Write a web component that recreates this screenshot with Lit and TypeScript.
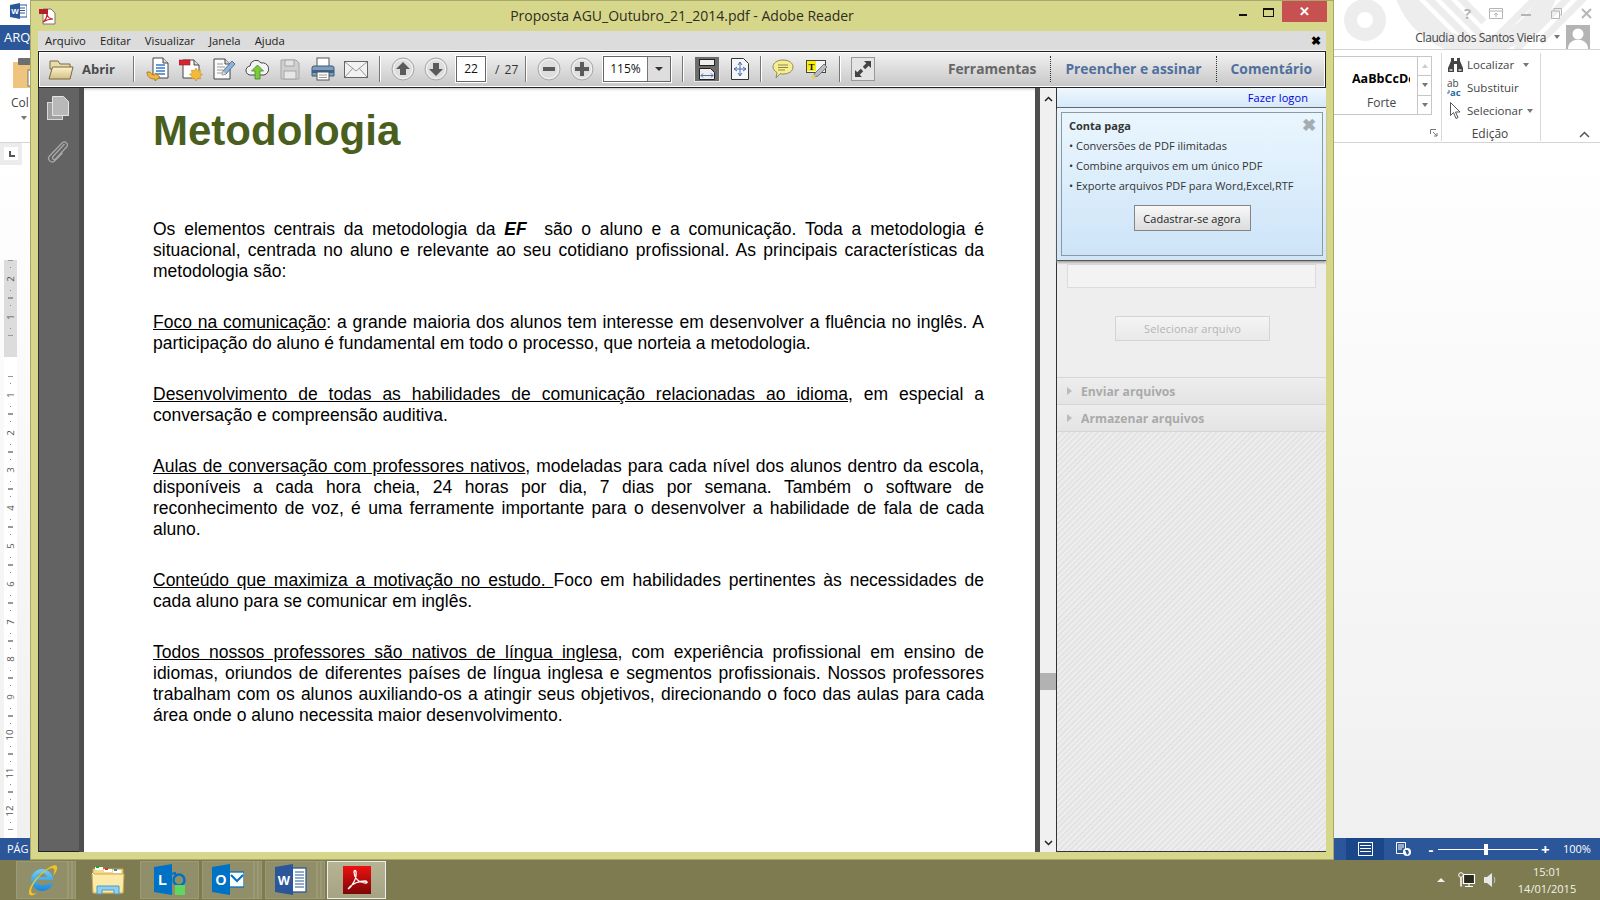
import { LitElement, css, html, svg } from "lit";
import { customElement } from "lit/decorators.js";

const folder = svg`<svg width="26" height="22" viewBox="0 0 26 22"><defs><linearGradient id="fo" x1="0" y1="0" x2="0" y2="1"><stop offset="0" stop-color="#fbf3d0"/><stop offset="1" stop-color="#d6bf85"/></linearGradient></defs><path d="M2 3h8l2 3h10v5H2z" fill="#e9dcae" stroke="#7d6a3c"/><path d="M1 21 4.500 9H25l-3 12z" fill="url(#fo)" stroke="#7d6a3c"/></svg>`;

const tbIcons = [
  svg`<svg width="24" height="24" viewBox="0 0 24 24"><path d="M7 1h10l5 5v15H7z" fill="#fff" stroke="#444"/><path d="M17 1v5h5" fill="#ddd" stroke="#444"/><path d="M10 8h9M10 11h9M10 14h9M10 17h9" stroke="#3a78c9" stroke-width="1.500"/><path d="M1 15c0 5 3 7 8 7v2l5-4-5-4v2c-3 0-4-1-5-3z" fill="#f0b840" stroke="#a86f10" stroke-width=".8"/></svg>`,
  svg`<svg width="24" height="24" viewBox="0 0 24 24"><path d="M4 3h11l5 5v13H4z" fill="#fff" stroke="#444"/><path d="M15 3v5h5" fill="#ddd" stroke="#444"/><rect x="0" y="3" width="11" height="5" fill="#d9232e" stroke="#9c1a20" stroke-width=".6"/><path d="m17 11 1.500 2.500 3-.5-.5 3 2.500 1.500-2.500 1.500.5 3-3-.5-1.500 2.500-1.500-2.500-3 .5.5-3-2.500-1.500 2.500-1.500-.5-3 3 .5z" fill="#f2b93a" stroke="#b9821c" stroke-width=".5"/></svg>`,
  svg`<svg width="24" height="24" viewBox="0 0 24 24"><path d="M2 2h11l5 5v15H2z" fill="#fafafa" stroke="#444"/><path d="M13 2v5h5" fill="#ddd" stroke="#444"/><path d="M5 7h6M5 10h8M5 13h6M5 16h5" stroke="#999"/><path d="m10 18 1-4 9-10 3 3-9 10z" fill="#8db4d8" stroke="#3c5f88" stroke-width=".8"/><path d="m10 18 1-4 3 3z" fill="#f3d9a8"/></svg>`,
  svg`<svg width="24" height="24" viewBox="0 0 24 24"><path d="M6 19a4.500 4.500 0 0 1-1-9 6 6 0 0 1 11-3 5 5 0 0 1 3 12z" fill="#f4f4f4" stroke="#444" transform="translate(0 -1)"/><path d="M12.500 8l6 6h-3.500v8h-5v-8H6.500z" fill="#7ccb3c" stroke="#3f8a1f" stroke-width=".8"/></svg>`,
  svg`<svg width="24" height="24" viewBox="0 0 24 24"><path d="M3 3h15l3 3v16H3z" fill="#cfcfcf" stroke="#a5a5a5"/><rect x="7" y="3" width="9" height="6" fill="#e4e4e4" stroke="#a5a5a5"/><rect x="6" y="14" width="12" height="8" fill="#e6e6e6" stroke="#a5a5a5"/></svg>`,
  svg`<svg width="24" height="24" viewBox="0 0 24 24"><rect x="6" y="1" width="12" height="9" fill="#fff" stroke="#555"/><path d="M3 9h18a2 2 0 0 1 2 2v8H1v-8a2 2 0 0 1 2-2z" fill="#7d9fbf" stroke="#3d5a75"/><rect x="1" y="13" width="22" height="3" fill="#3d6187"/><rect x="6" y="15" width="12" height="8" fill="#fff" stroke="#555"/><path d="M8 18h8M8 20.500h8" stroke="#999"/></svg>`,
  svg`<svg width="24" height="24" viewBox="0 0 24 24"><rect x="0.500" y="4.500" width="23" height="16" fill="#f2f2f2" stroke="#666"/><path d="m1 5 11 9 11-9M1 20l8-9M23 20l-8-9" fill="none" stroke="#999"/></svg>`,
];

const circleBtn = (d: string) => svg`<svg width="24" height="24" viewBox="0 0 24 24"><circle cx="12" cy="12" r="11" fill="#dedede" stroke="#a8a8a8"/><circle cx="12" cy="12" r="9.500" fill="none" stroke="#f6f6f6"/><path d="${d}" fill="#5a5a5a"/></svg>`;
const upArrow = circleBtn("M12 5l7 7h-4v6H9v-6H5z");
const downArrow = circleBtn("M12 19l7-7h-4V6H9v6H5z");
const minusIcon = circleBtn("M6 10h12v4H6z");
const plusIcon = circleBtn("M10 5h4v5h5v4h-5v5h-4v-5H5v-4h5z");

const fitWidth = svg`<svg width="26" height="26" viewBox="0 0 26 26"><rect width="26" height="26" fill="#6c6c6c"/><rect x=".5" y=".5" width="25" height="25" fill="none" stroke="#e8e8e8"/><rect x="5.500" y="3.500" width="15" height="6" fill="#eee" stroke="#222"/><path d="M5.500 12.500h11l4 4v7h-15z" fill="#eee" stroke="#222"/><path d="M7 19.500h12M7 19.500l2-2M7 19.500l2 2M19 19.500l-2-2M19 19.500l-2 2" stroke="#4a6fb0" fill="none"/></svg>`;
const fitPage = svg`<svg width="18" height="24" viewBox="0 0 18 24"><path d="M.5 1.500h12l5 5v16H.500z" fill="#f6f6f6" stroke="#333"/><path d="M9 5v14M3 12h12M9 5 7 8M9 5l2 3M9 19l-2-3M9 19l2-3M3 12l3-2M3 12l3 2M15 12l-3-2M15 12l-3 2" stroke="#4a6fb0" fill="none"/></svg>`;
const commentIcon = svg`<svg width="22" height="20" viewBox="0 0 22 20"><path d="M11 1c6 0 10 3 10 7s-4 7-10 7c-1 0-2 0-3-.3L4 19l1-5.500C2.500 12 1 10 1 8c0-4 4-7 10-7z" fill="#f9ee8f" stroke="#8a8a5a"/><path d="M6 6h10M6 8.500h10M6 11h7" stroke="#8c8652"/></svg>`;
const highlightIcon = svg`<svg width="22" height="22" viewBox="0 0 22 22"><rect x=".5" y="2.500" width="19" height="12" fill="#f5f5f5" stroke="#444"/><rect x="1" y="3" width="9" height="10" fill="#f8f000"/><text x="5.500" y="11.500" font-size="9" font-family="Liberation Serif" font-weight="700" text-anchor="middle" fill="#111">T</text><path d="m7 19 2-4 9-9 3 3-9 9z" fill="#b8bcc4" stroke="#666" stroke-width=".8"/><circle cx="7.500" cy="19" r="2" fill="#e8d060"/></svg>`;
const expandIcon = svg`<svg width="24" height="24" viewBox="0 0 24 24"><rect x=".5" y=".5" width="23" height="23" fill="#e4e4e4" stroke="#999"/><path d="M13 4h7v7l-2.300-2.300-3.500 3.500-2.400-2.400 3.500-3.500zM11 20H4v-7l2.300 2.300 3.500-3.500 2.400 2.400-3.500 3.500z" fill="#444"/></svg>`;

const pagesIcon = svg`<svg width="22" height="24" viewBox="0 0 22 24"><rect x=".5" y="6.500" width="15" height="17" fill="#a0a0a0" stroke="#d8d8d8"/><path d="M5.500 .5h11l5 5v14h-16z" fill="#b8b8b8" stroke="#e4e4e4"/></svg>`;
const clipIcon = svg`<svg width="22" height="24" viewBox="0 0 22 24"><path d="M18 5 6.500 17.500c-1.500 1.700 1 4 2.600 2.500L20 8c2.500-3-1.500-7-4.500-4L3 17c-3 3.300 2 8 5 5l8-8" fill="none" stroke="#a8a8a8" stroke-width="1.300" transform="translate(-.5 -1)"/></svg>`;

const wordBadge = svg`<svg width="17" height="16" viewBox="0 0 17 16"><rect x="6" y="2" width="11" height="12" fill="#fff" stroke="#2b579a"/><path d="M9 5h6M9 7.500h6M9 10h6" stroke="#2b579a"/><path d="M0 2 10 0v16L0 14z" fill="#2b579a"/><text x="5" y="11" font-size="8" font-weight="700" font-family="Liberation Sans" text-anchor="middle" fill="#fff">W</text></svg>`;
const pdfBadge = svg`<svg width="18" height="17" viewBox="0 0 18 17"><path d="M5 1h8l4 4v11H5z" fill="#fff" stroke="#777"/><rect x="1" y="1" width="9" height="5" fill="#b3202a"/><path d="M5 14c3-2 4-6 4-9 0 3 2 6 6 6-3 0-7 1-10 3z" fill="none" stroke="#c22" stroke-width="1.200"/></svg>`;

const clipboard = svg`<svg width="18" height="30" viewBox="0 0 18 30"><rect y="4" width="24" height="26" fill="#eec47e"/><rect x="5" y="0" width="14" height="7" rx="1" fill="#6e6e6e"/><rect x="15" y="12" width="10" height="16" fill="#fff" stroke="#777"/></svg>`;
const binoculars = svg`<svg width="15" height="14" viewBox="0 0 15 14"><path d="M3 0h3v3h3V0h3v3l3 7v4H9V6H6v8H0v-4l3-7z" fill="#444"/><path d="M1.500 11h3v2h-3zM10.500 11h3v2h-3z" fill="#bbb"/></svg>`;
const replaceIcon = svg`<svg width="17" height="20" viewBox="0 0 17 20"><text x="0" y="9" font-size="10" font-family="Open Sans" fill="#444">ab</text><text x="3" y="18" font-size="9.500" font-family="Open Sans" font-weight="700" fill="#2b69a8">ac</text><path d="M2 12v3H0" fill="none" stroke="#2b69a8"/></svg>`;
const cursorIcon = svg`<svg width="11" height="17" viewBox="0 0 11 17"><path d="M.5.500v13l3-3 2.500 6 2-1-2.500-5.500H10z" fill="#fff" stroke="#555"/></svg>`;
const launcher = svg`<svg width="8" height="8" viewBox="0 0 8 8"><path d="M.5 5V.5H6M3 3l4 4M7 4v3H4" fill="none" stroke="#777"/></svg>`;

const titleArt = svg`<svg class="art" width="266" height="49" viewBox="0 0 266 49"><g fill="none" stroke="#ededed"><circle cx="31" cy="20" r="14.500" stroke-width="13"/><circle cx="142" cy="-30" r="76" stroke-width="18"/></g><g stroke="#ededed" stroke-width="7"><path d="M76-4 130 50M92-4 146 50M108-4 162 50M124-4 150 22M204-4 150 50M220-4 166 50M236-4 182 50M252-4 206 42"/></g></svg>`;

const avatar = svg`<svg width="24" height="24" viewBox="0 0 24 24"><rect width="24" height="24" fill="#b4b4b4"/><circle cx="12" cy="9" r="5.500" fill="#fff"/><path d="M2 24c0-6 4-8 7-9h6c3 1 7 3 7 9z" fill="#fff"/></svg>`;

const ieIcon = svg`<svg width="32" height="32" viewBox="0 0 32 32"><defs><linearGradient id="ie" x1="0" y1="0" x2="0" y2="1"><stop offset="0" stop-color="#6fd0f8"/><stop offset="1" stop-color="#1b86d8"/></linearGradient></defs><path d="M27 16H11c.500 5 6 7 12 3h4c-2 6-7 8-11 8-6 0-11-5-11-11S10 5 16 5s11 5 11 11zm-6-3c-.5-5-9-5-10 0z" fill="url(#ie)"/><path d="M4 31C0 28 8 12 24 3c5-3 8-2 7 2-.5 2-2 5-4 7 1-3 2-6 1-7-2-2-8 1-13 6C9 17 3 26 6 29c1 1 3 .5 5-.5-3 2.500-5 3.500-7 2.500z" fill="#f3c322"/></svg>`;
const explorerIcon = svg`<svg width="34" height="30" viewBox="0 0 34 30"><path d="M2 4h30v24H2z" fill="#f4dc8c" stroke="#c9aa55"/><path d="M4 2h8v3H4z" fill="#fff"/><path d="M5 1h3v2H5z" fill="#16a82b"/><path d="M13 4h8v3h-8z" fill="#fff"/><path d="M14 3h3v2h-3z" fill="#d8392b"/><path d="M22 5h8v3h-8z" fill="#fff"/><path d="M23 4h3v2h-3z" fill="#2a8ad8"/><path d="M1 9h32l-1 19H2z" fill="#fbeaa8" stroke="#c9aa55"/><path d="M6 21h22v8h-5v-4H11v4H6z" fill="#8fd0ee" stroke="#4f9ac8"/><path d="M4 11 1 8" stroke="#fff"/></svg>`;
const lyncIcon = svg`<svg width="32" height="32" viewBox="0 0 32 32"><path d="M0 3 18 0v31L0 28z" fill="#0072c6"/><text x="8.500" y="21" font-size="14" font-weight="700" font-family="Liberation Sans" text-anchor="middle" fill="#fff">L</text><circle cx="25" cy="16" r="5.500" fill="none" stroke="#0072c6" stroke-width="2.500"/><path d="m17 10 4-1 1 4" fill="none" stroke="#0072c6" stroke-width="2"/><rect x="21" y="21" width="10" height="10" fill="#5fd75f"/></svg>`;
const outlookIcon = svg`<svg width="32" height="32" viewBox="0 0 32 32"><rect x="17" y="8" width="15" height="15" fill="#fff" stroke="#0072c6" stroke-width="1.300"/><path d="m19 11 6 6 6-6" fill="none" stroke="#0072c6" stroke-width="2"/><path d="M0 3 18 0v31L0 28z" fill="#0072c6"/><text x="9" y="21" font-size="14" font-weight="700" font-family="Liberation Sans" text-anchor="middle" fill="#fff">O</text></svg>`;
const wordIcon = svg`<svg width="32" height="32" viewBox="0 0 32 32"><rect x="17" y="4" width="14" height="24" fill="#fff" stroke="#2b579a" stroke-width="1.300"/><path d="M20 8h9M20 11h9M20 14h9M20 17h9M20 20h9M20 23h9" stroke="#2b579a"/><path d="M0 3 18 0v31L0 28z" fill="#2b579a"/><text x="9" y="21" font-size="13" font-weight="700" font-family="Liberation Sans" text-anchor="middle" fill="#fff">W</text></svg>`;
const acrobatIcon = svg`<svg width="30" height="30" viewBox="0 0 30 30"><defs><linearGradient id="ac" x1="0" y1="0" x2="0" y2="1"><stop offset="0" stop-color="#ee1111"/><stop offset="1" stop-color="#7c0606"/></linearGradient></defs><rect x="1" y="1" width="28" height="28" fill="url(#ac)"/><path d="M6 24c5-3 9-12 8-17 0-2-2-2-2 0 0 5 4 11 12 11 2 0 1-2-1-2-5 0-13 2-17 8z" fill="none" stroke="#fff" stroke-width="1.300"/></svg>`;

const networkIcon = svg`<svg width="18" height="16" viewBox="0 0 18 16"><path d="M5.500 2.500h11v9h-11zM11 11.500v3M7 14.500h8" fill="#2a2a1c" stroke="#fff" stroke-width="1.200"/><circle cx="3" cy="3" r="2.300" fill="#7e7b50" stroke="#fff"/><path d="M3 5.500v9" stroke="#fff" stroke-width="1.500"/></svg>`;
const speakerIcon = svg`<svg width="14" height="16" viewBox="0 0 14 16"><path d="M0 5h3l5-4v14l-5-4H0z" fill="#e8e8e8"/><path d="M10 5c1 2 1 4 0 6" fill="none" stroke="#cfcfb8"/></svg>`;
const printLayout = svg`<svg width="15" height="14" viewBox="0 0 15 14"><path d="M.5 0v14M14.500 0v14M0 .5h15M0 13.500h15M2 3.500h11M2 6.500h11M2 9.500h11" fill="none" stroke="#fff"/></svg>`;
const webLayout = svg`<svg width="15" height="14" viewBox="0 0 15 14"><path d="M.5.500h9v11H.5z" fill="none" stroke="#fff"/><path d="M2 3h6M2 5h6M2 7h4" stroke="#fff"/><circle cx="11" cy="10" r="4" fill="#fff"/><path d="M9 8h3l1 3-2 2z" fill="#2b579a"/></svg>`;

const ctrlRibbon = svg`<svg width="14" height="11" viewBox="0 0 14 11"><path d="M.5.500h13v10H.5zM.5 3h13M7 9V5M5 7l2-2 2 2" fill="none" stroke="#b5b5b5"/></svg>`;
const ctrlMin = svg`<svg class="gap-a" width="12" height="11" viewBox="0 0 12 11"><path d="M1 7h10" stroke="#b5b5b5" stroke-width="2"/></svg>`;
const ctrlRestore = svg`<svg class="gap-b" width="11" height="11" viewBox="0 0 11 11"><path d="M3 2.500V.5h7.500V7H8.500M.5 3h8v7.500h-8z" fill="none" stroke="#b5b5b5"/></svg>`;
const ctrlClose = svg`<svg class="gap-b" width="11" height="11" viewBox="0 0 11 11"><path d="m1 1 9 9M10 1l-9 9" stroke="#b5b5b5" stroke-width="1.800"/></svg>`;
const chevronUp = svg`<svg width="11" height="7" viewBox="0 0 11 7"><path d="m1 6 4.500-4.500L10 6" fill="none" stroke="#555" stroke-width="1.500"/></svg>`;
const scrollUp = svg`<svg width="9" height="6" viewBox="0 0 9 6"><path d="m1 5 3.500-3.500L8 5" fill="none" stroke="#222" stroke-width="1.500"/></svg>`;
const scrollDown = svg`<svg width="9" height="6" viewBox="0 0 9 6"><path d="m1 1 3.500 3.500L8 1" fill="none" stroke="#222" stroke-width="1.500"/></svg>`;

const rulerCell = (n: number) => html`<div class="rcell">
  <i class="rdash"></i><i class="rdot"></i><span class="rnum">${n}</span><i class="rdot"></i><i class="rdash"></i>
</div>`;

@customElement("app-root")
export class AppRoot extends LitElement {
  static styles = css`
    :host {
      display: block;
      width: 1600px;
      height: 900px;
      position: relative;
      overflow: hidden;
      font-family: "Open Sans", "Noto Sans", sans-serif;
      background: #fff;
    }
    svg {
      display: block;
      flex: none;
    }
    .word {
      height: 860px;
      display: flex;
      flex-direction: column;
    }
    .ribbon {
      height: 143px;
      box-sizing: border-box;
      flex: none;
      border-bottom: 1px solid #d4d4d4;
      display: flex;
      justify-content: space-between;
      background: #fff;
    }
    .rib-left {
      width: 30px;
      overflow: hidden;
      display: flex;
      flex-direction: column;
    }
    .wbadge {
      height: 25px;
      padding: 3px 0 0 10px;
      box-sizing: border-box;
    }
    .arq {
      height: 25px;
      background: #2b579a;
      color: #fff;
      font-size: 13px;
      line-height: 25px;
      padding-left: 4px;
      white-space: nowrap;
    }
    .paste {
      padding: 8px 0 0 13px;
      height: 36px;
    }
    .col {
      font-size: 12px;
      color: #444;
      padding-left: 11px;
      line-height: 18px;
    }
    .caret-s {
      display: block;
      width: 0;
      height: 0;
      border: 3px solid transparent;
      border-top: 4px solid #777;
      border-bottom: 0;
    }
    .caret-s.up {
      transform: rotate(180deg);
      border-top-color: #ccc;
    }
    .col-caret {
      margin: 4px 0 0 21px;
    }
    .rib-right {
      width: 266px;
      position: relative;
      display: flex;
      flex-direction: column;
    }
    .art {
      position: absolute;
      left: 0;
      top: 0;
    }
    .w-ctrls {
      height: 25px;
      position: relative;
      display: flex;
      align-items: center;
      gap: 15px;
      padding-left: 130px;
      color: #b5b5b5;
    }
    .w-help {
      font-size: 15px;
      font-weight: 700;
      width: 10px;
    }
    .w-ctrls svg {
      margin-top: 1px;
    }
    .w-ctrls .gap-a {
      margin-left: 2px;
    }
    .w-ctrls .gap-b {
      margin-left: 4px;
    }
    .w-user {
      height: 24px;
      position: relative;
      display: flex;
      align-items: center;
      justify-content: flex-end;
      padding-right: 10px;
      font-size: 12px;
      letter-spacing: -0.4px;
      color: #444;
      border-bottom: 1px solid #d4d4d4;
    }
    .w-user .caret-s {
      margin: 0 6px 0 8px;
    }
    .w-tools {
      display: flex;
      flex: 1;
      padding-top: 6px;
    }
    .gallery {
      width: 84px;
      height: 59px;
      box-sizing: border-box;
      border: 1px solid #c6c6c6;
      border-left: 0;
      display: flex;
      flex-direction: column;
      align-items: flex-start;
      padding-left: 18px;
      overflow: hidden;
    }
    .sample {
      font-size: 12.500px;
      font-weight: 700;
      color: #000;
      line-height: 20px;
      margin-top: 12px;
      width: 58px;
      overflow: hidden;
      white-space: nowrap;
    }
    .forte {
      font-size: 12px;
      color: #444;
      margin-top: 5px;
      margin-left: 15px;
    }
    .g-scroll {
      width: 14px;
      height: 59px;
      box-sizing: border-box;
      border: 1px solid #c6c6c6;
      border-left: 0;
      display: flex;
      flex-direction: column;
      align-items: center;
      color: #555;
    }
    .g-scroll span {
      flex: 1;
      width: 100%;
      display: flex;
      align-items: center;
      justify-content: center;
      border-bottom: 1px solid #c6c6c6;
    }
    .g-scroll span:last-child {
      border-bottom: 0;
    }
    .launch {
      width: 11px;
      padding: 73px 0 0 0;
      margin-left: -2px;
      box-sizing: content-box;
      flex: none;
    }
    .edit-group {
      width: 100px;
      margin-top: -3px;
      height: 88px;
      border-left: 1px solid #d8d8d8;
      border-right: 1px solid #d8d8d8;
      box-sizing: border-box;
      padding-left: 6px;
      display: flex;
      flex-direction: column;
      font-size: 11.500px;
      color: #444;
      flex: none;
    }
    .edit-row {
      height: 23px;
      display: flex;
      align-items: center;
      gap: 4px;
      flex: none;
    }
    .edit-row .ico {
      width: 15px;
      display: flex;
      justify-content: center;
    }
    .edit-row .caret-s {
      margin-left: 0;
    }
    .edit-row .caret-s.far {
      margin-left: 5px;
    }
    .edit-title {
      text-align: center;
      margin-top: 3px;
      padding-right: 8px;
      font-size: 12px;
    }
    .collapse {
      padding: 75px 0 0 38px;
    }
    .doc {
      flex: 1;
      min-height: 0;
      overflow: hidden;
      display: flex;
      justify-content: space-between;
      background: linear-gradient(#fff, #f0f0f0);
    }
    .ruler-col {
      width: 30px;
      overflow: hidden;
      display: flex;
      flex-direction: column;
    }
    .tab-wrap {
      width: 22px;
      height: 22px;
      background: #ececec;
      padding: 4px;
      box-sizing: border-box;
      flex: none;
    }
    .tab-btn {
      width: 14px;
      height: 13px;
      background: #fff;
      position: relative;
    }
    .tab-btn::after {
      content: "";
      position: absolute;
      left: 5px;
      top: 4px;
      width: 4px;
      height: 4px;
      border-left: 2px solid #555;
      border-bottom: 2px solid #555;
    }
    .ruler {
      margin: 95px 0 0 4px;
      width: 13px;
      flex: none;
    }
    .ruler-gray {
      height: 97px;
      background: #dcdcdc;
    }
    .ruler-white {
      background: #fff;
      padding-top: 19px;
      height: 500px;
    }
    .rcell {
      height: 37.800px;
      display: flex;
      flex-direction: column;
      align-items: center;
      justify-content: space-between;
      overflow: hidden;
    }
    .rnum {
      font-size: 9.500px;
      line-height: 10px;
      color: #555;
      transform: rotate(-90deg);
    }
    .rdash {
      width: 5px;
      height: 1px;
      background: #999;
    }
    .rdot {
      width: 1px;
      height: 1px;
      background: #888;
    }
    .status {
      height: 22px;
      flex: none;
      background: #2b579a;
      color: #fff;
      display: flex;
      justify-content: space-between;
      font-size: 11px;
      line-height: 22px;
    }
    .status-l {
      padding-left: 7px;
    }
    .status-r {
      width: 266px;
      display: flex;
      align-items: center;
      padding-left: 12px;
      box-sizing: border-box;
    }
    .view {
      width: 38px;
      height: 22px;
      display: flex;
      align-items: center;
      justify-content: center;
    }
    .view.on {
      background: #19478a;
    }
    .view + .view {
      margin-right: 5px;
    }
    .zoom-sym {
      width: 8px;
      font-size: 15px;
      font-weight: 700;
      text-align: center;
    }
    .slider {
      width: 100px;
      height: 1px;
      background: #fff;
      margin: 0 3px;
      position: relative;
    }
    .thumb {
      position: absolute;
      left: 46px;
      top: -5px;
      width: 4px;
      height: 11px;
      background: #fff;
    }
    .pct {
      margin-left: 14px;
    }

    .taskbar {
      height: 40px;
      background: #7e7b50;
      display: flex;
      align-items: center;
      padding-left: 16px;
      box-sizing: border-box;
    }
    .tk {
      height: 38px;
      box-sizing: border-box;
      border: 1px solid #9c9a74;
      background: #918f69;
      display: flex;
      align-items: center;
      justify-content: center;
      flex: none;
    }
    .tk.stack {
      width: 52px;
    }
    .tk.wide {
      width: 59px;
    }
    .tk.plain {
      border-color: transparent;
      background: none;
      width: 64px;
    }
    .tk.active {
      width: 59px;
      border: 1px solid #eee;
      background: linear-gradient(#b6b494, #a5a384);
      margin-left: 2px;
    }
    .tab-end {
      width: 4px;
      height: 38px;
      box-sizing: border-box;
      border: 1px solid #9c9a74;
      background: #918f69;
      flex: none;
    }
    .tk-gap {
      width: 3px;
      flex: none;
    }
    .tray {
      margin-left: auto;
      display: flex;
      align-items: center;
      color: #fff;
    }
    .tray-up {
      width: 0;
      height: 0;
      border: 4px solid transparent;
      border-bottom: 4px solid #eee;
      border-top: 0;
      margin-right: 13px;
    }
    .tray .sp {
      margin: 0 8px 0 0;
    }
    .clock {
      width: 70px;
      margin: 0 18px 0 6px;
      text-align: center;
      font-size: 11px;
      line-height: 17px;
      color: #f3f3ea;
    }

    .reader {
      position: absolute;
      left: 30px;
      top: 0;
      width: 1304px;
      height: 860px;
      box-sizing: border-box;
      background: #d7d78b;
      border: 1px solid #a8a86c;
      padding: 0 7px 7px;
      display: flex;
      flex-direction: column;
    }
    .titlebar {
      height: 30px;
      padding-bottom: 2px;
      box-sizing: border-box;
      flex: none;
      position: relative;
      display: flex;
      align-items: center;
      justify-content: center;
      font-size: 14px;
      color: #2e2e22;
    }
    .pdfb {
      position: absolute;
      left: 0;
      top: 7px;
    }
    .win-btns {
      position: absolute;
      right: -1px;
      top: 0;
      display: flex;
      align-items: flex-start;
    }
    .wb {
      width: 26px;
      height: 21px;
      position: relative;
    }
    .wb.min::after {
      content: "";
      position: absolute;
      left: 9px;
      top: 13px;
      width: 8px;
      height: 2px;
      background: #111;
    }
    .wb.max::after {
      content: "";
      position: absolute;
      left: 7px;
      top: 7px;
      width: 9px;
      height: 6px;
      border: 1px solid #111;
      border-top-width: 2px;
    }
    .wb.close {
      width: 45px;
      background: #c75050;
      color: #fff;
      text-align: center;
      font-size: 13px;
      font-weight: 700;
      line-height: 20px;
    }
    .menubar {
      height: 20px;
      box-sizing: border-box;
      padding: 0 0 1px 7px;
      flex: none;
      background: #dcdcdc;
      border-bottom: 1px solid #f3f3f3;
      display: flex;
      align-items: center;
      gap: 14px;
      font-size: 11.300px;
      color: #222;
    }
    .menu-x {
      margin-left: auto;
      margin-right: 5px;
      font-weight: 700;
      font-size: 12px;
      color: #000;
    }
    .toolbar {
      height: 37px;
      flex: none;
      box-sizing: border-box;
      border: 1px solid #222;
      box-shadow: inset 0 0 0 1px #fff;
      background: linear-gradient(#f2f2f2, #c6c6c6);
      display: flex;
      align-items: center;
      padding: 0 0 1px 9px;
      font-size: 14px;
    }
    .open {
      display: flex;
      align-items: center;
      gap: 8px;
      font-weight: 700;
      color: #4a4a50;
      font-size: 13px;
      width: 85px;
      flex: none;
    }
    .tsep {
      width: 1px;
      height: 26px;
      background: #777;
      box-shadow: 1px 0 0 #fff;
      flex: none;
      margin: 0 11px;
    }
    .tsep.first {
      margin-left: 0;
      margin-right: 12px;
    }
    .icons {
      display: flex;
      gap: 9px;
    }
    .page-box {
      width: 30px;
      height: 26px;
      box-sizing: border-box;
      background: #fff;
      border: 1px solid #666;
      outline: 1px solid #fff;
      text-align: center;
      font-size: 12px;
      line-height: 24px;
      color: #111;
      margin-left: 8px;
    }
    .page-of {
      font-size: 12px;
      color: #333;
      margin-left: 9px;
      width: 19px;
      white-space: nowrap;
      word-spacing: 2px;
    }
    .zoom-box {
      width: 68px;
      height: 26px;
      box-sizing: border-box;
      background: #fff;
      border: 1px solid #666;
      outline: 1px solid #fff;
      display: flex;
      margin-left: 9px;
    }
    .zoom-val {
      flex: 1;
      font-size: 12px;
      line-height: 24px;
      text-align: center;
      color: #111;
    }
    .zoom-drop {
      width: 22px;
      background: #dedede;
      border-left: 1px solid #777;
      display: flex;
      align-items: center;
      justify-content: center;
    }
    .caret-d {
      width: 0;
      height: 0;
      border: 4px solid transparent;
      border-top: 4px solid #333;
      border-bottom: 0;
    }
    .pages-tools {
      display: flex;
      align-items: center;
      gap: 12px;
    }
    .pages-tools.fit {
      gap: 11px;
    }
    .tabs {
      margin-left: auto;
      display: flex;
      height: 100%;
      align-items: center;
      font-weight: 700;
      font-size: 13.800px;
    }
    .t-label {
      padding: 0 14px;
      height: 26px;
      line-height: 26px;
      color: #4f6f9d;
      border-left: 1px dotted #333;
    }
    .t-label:first-child {
      border-left: 0;
      color: #666;
    }
    .t-label:last-child {
      padding-right: 13px;
    }
    .body {
      flex: 1;
      display: flex;
      min-height: 0;
    }
    .rail {
      width: 41px;
      flex: none;
      background: #636363;
      border-left: 1px solid #333;
      border-bottom: 1px solid #222;
      box-sizing: border-box;
      display: flex;
      flex-direction: column;
      align-items: center;
      padding: 8px 2px 0 0;
      gap: 20px;
    }
    .strip {
      width: 5px;
      flex: none;
      background: #4e4e4e;
    }
    .page {
      flex: 1;
      background: #fff;
      padding: 19px 51px 0 69px;
      box-shadow: inset 0 3px 3px -2px #bbb;
      font-family: "Liberation Sans", Arial, sans-serif;
      color: #000;
      min-width: 0;
    }
    h1 {
      margin: 0 0 64px;
      font-size: 42px;
      line-height: 48px;
      font-weight: 700;
      color: #4a5f1e;
    }
    p {
      margin: 0 0 30.300px;
      font-size: 17.500px;
      line-height: 20.900px;
      text-align: justify;
    }
    .scroll {
      width: 16px;
      flex: none;
      background: #f0f0f0;
      display: flex;
      flex-direction: column;
      align-items: center;
      justify-content: space-between;
      padding: 8px 0 6px;
      box-sizing: border-box;
      position: relative;
    }
    .sthumb {
      position: absolute;
      left: 0;
      top: 585px;
      width: 16px;
      height: 17px;
      background: #b2b2b2;
    }
    .side {
      width: 270px;
      flex: none;
      border-left: 1px solid #333;
      box-sizing: border-box;
      display: flex;
      flex-direction: column;
      background: #eee;
      border-bottom: 1px solid #333;
      font-size: 11px;
    }
    .login {
      height: 20px;
      flex: none;
      box-sizing: border-box;
      border-bottom: 1px solid #666;
      background: linear-gradient(#eef7fe, #d6e9f9);
      text-align: right;
      color: #0000e0;
      padding-right: 18px;
      line-height: 20px;
      letter-spacing: 0.1px;
    }
    .card-wrap {
      height: 153px;
      flex: none;
      box-sizing: border-box;
      padding: 4px 3px 5px 4px;
      background: linear-gradient(#e8f4fd, #d2e6f7);
      border-bottom: 1px solid #555;
      box-shadow: 0 2px 2px #aaa;
      position: relative;
    }
    .card {
      height: 144px;
      box-sizing: border-box;
      border: 1px solid #8d98a0;
      background: linear-gradient(#eaf6fe, #cde4f8);
      padding: 4px 7px 0;
      position: relative;
      color: #333;
    }
    .card h3 {
      margin: 0 0 2px;
      font-size: 11px;
      line-height: 17px;
      font-weight: 700;
    }
    .card-x {
      position: absolute;
      right: 6px;
      top: 2px;
      font-size: 17px;
      font-weight: 700;
      color: #a5adb4;
      line-height: 20px;
    }
    .card div.li {
      line-height: 20px;
    }
    .signup {
      display: block;
      margin: 9px auto 0;
      width: 117px;
      height: 26px;
      box-sizing: border-box;
      border: 1px solid #858585;
      background: linear-gradient(#f8f8f8, #dcdcdc);
      font: inherit;
      color: #222;
      padding: 0;
    }
    .upload {
      height: 116px;
      flex: none;
      padding: 3px 10px 0;
      box-sizing: border-box;
    }
    .fake-input {
      height: 24px;
      box-sizing: border-box;
      border: 1px solid #dcdcdc;
      background: #f3f3f3;
    }
    .disabled-btn {
      width: 155px;
      height: 25px;
      margin: 28px 0 0 48px;
      box-sizing: border-box;
      border: 1px solid #d4d4d4;
      background: linear-gradient(#f4f4f4, #e9e9e9);
      color: #b5b5b5;
      text-align: center;
      line-height: 23px;
      letter-spacing: 0.1px;
    }
    .sect {
      height: 27px;
      flex: none;
      box-sizing: border-box;
      border-top: 1px solid #d6d6d6;
      background: linear-gradient(#ededed, #e4e4e4);
      display: flex;
      align-items: center;
      padding-left: 10px;
      gap: 9px;
      color: #aaa;
      font-size: 12.200px;
      font-weight: 700;
    }
    .sect i {
      width: 0;
      height: 0;
      border: 4px solid transparent;
      border-left: 5px solid #bbb;
      border-right: 0;
    }
    .hatch {
      flex: 1;
      border-top: 1px solid #d6d6d6;
      background: repeating-linear-gradient(135deg, #e4e4e4 0 2px, #ededed 2px 4px);
    }
  `;

  protected override render() {
    return html`
      <div class="word">
        <div class="ribbon">
          <div class="rib-left">
            <div class="wbadge">${wordBadge}</div>
            <div class="arq">ARQ</div>
            <div class="paste">${clipboard}</div>
            <div class="col">Col</div>
            <div class="caret-s col-caret"></div>
          </div>
          <div class="rib-right">
            ${titleArt}
            <div class="w-ctrls">
              <span class="w-help">?</span>
              ${ctrlRibbon}${ctrlMin}${ctrlRestore}${ctrlClose}
            </div>
            <div class="w-user">
              <span>Claudia dos Santos Vieira</span>
              <span class="caret-s"></span>
              ${avatar}
            </div>
            <div class="w-tools">
              <div class="gallery">
                <div class="sample">AaBbCcDc</div>
                <div class="forte">Forte</div>
              </div>
              <div class="g-scroll">
                <span><i class="caret-s up"></i></span>
                <span><i class="caret-s"></i></span>
                <span><i class="caret-s"></i></span>
              </div>
              <div class="launch">${launcher}</div>
              <div class="edit-group">
                <div class="edit-row"><span class="ico">${binoculars}</span>Localizar<i class="caret-s far"></i></div>
                <div class="edit-row"><span class="ico">${replaceIcon}</span>Substituir</div>
                <div class="edit-row"><span class="ico">${cursorIcon}</span>Selecionar<i class="caret-s"></i></div>
                <div class="edit-title">Edição</div>
              </div>
              <div class="collapse">${chevronUp}</div>
            </div>
          </div>
        </div>
        <div class="doc">
          <div class="ruler-col">
            <div class="tab-wrap"><div class="tab-btn"></div></div>
            <div class="ruler">
              <div class="ruler-gray">${rulerCell(2)}${rulerCell(1)}</div>
              <div class="ruler-white">${[1, 2, 3, 4, 5, 6, 7, 8, 9, 10, 11, 12].map(rulerCell)}</div>
            </div>
          </div>
        </div>
        <div class="status">
          <div class="status-l">PÁG</div>
          <div class="status-r">
            <span class="view on">${printLayout}</span>
            <span class="view">${webLayout}</span>
            <span class="zoom-sym">-</span>
            <span class="slider"><i class="thumb"></i></span>
            <span class="zoom-sym">+</span>
            <span class="pct">100%</span>
          </div>
        </div>
      </div>

      <div class="taskbar">
        <div class="tk stack">${ieIcon}</div><i class="tab-end"></i><i class="tab-end"></i>
        <div class="tk plain">${explorerIcon}</div>
        <div class="tk wide">${lyncIcon}</div><i class="tk-gap"></i>
        <div class="tk stack">${outlookIcon}</div><i class="tab-end"></i><i class="tab-end"></i><i class="tk-gap"></i>
        <div class="tk stack">${wordIcon}</div><i class="tab-end"></i><i class="tab-end"></i>
        <div class="tk active">${acrobatIcon}</div>
        <div class="tray">
          <i class="tray-up"></i>
          <span class="sp">${networkIcon}</span>
          <span class="sp">${speakerIcon}</span>
          <div class="clock">15:01<br />14/01/2015</div>
        </div>
      </div>

      <section class="reader">
        <div class="titlebar">
          <span class="pdfb">${pdfBadge}</span>
          Proposta AGU_Outubro_21_2014.pdf - Adobe Reader
          <div class="win-btns">
            <span class="wb min"></span>
            <span class="wb max"></span>
            <span class="wb close">✕</span>
          </div>
        </div>
        <div class="menubar">
          <span>Arquivo</span><span>Editar</span><span>Visualizar</span><span>Janela</span><span>Ajuda</span>
          <span class="menu-x">✖</span>
        </div>
        <div class="toolbar">
          <div class="open">${folder}<span>Abrir</span></div>
          <i class="tsep first"></i>
          <div class="icons">${tbIcons}</div>
          <i class="tsep"></i>
          <div class="icons">${upArrow}${downArrow}</div>
          <div class="page-box">22</div>
          <div class="page-of">/ 27</div>
          <i class="tsep"></i>
          <div class="icons">${minusIcon}${plusIcon}</div>
          <div class="zoom-box">
            <div class="zoom-val">115%</div>
            <div class="zoom-drop"><i class="caret-d"></i></div>
          </div>
          <i class="tsep"></i>
          <div class="pages-tools fit">${fitWidth}${fitPage}</div>
          <i class="tsep"></i>
          <div class="pages-tools">${commentIcon}${highlightIcon}</div>
          <i class="tsep"></i>
          ${expandIcon}
          <div class="tabs">
            <span class="t-label">Ferramentas</span>
            <span class="t-label">Preencher e assinar</span>
            <span class="t-label">Comentário</span>
          </div>
        </div>
        <div class="body">
          <div class="rail">${pagesIcon}${clipIcon}</div>
          <i class="strip"></i>
          <article class="page">
            <h1>Metodologia</h1>
            <p>Os elementos centrais da metodologia da <b><i>EF</i></b> &nbsp;são o aluno e a comunicação. Toda a metodologia é situacional, centrada no aluno e relevante ao seu cotidiano profissional. As principais características da metodologia são:</p>
            <p><u>Foco na comunicação</u>: a grande maioria dos alunos tem interesse em desenvolver a fluência no inglês. A participação do aluno é fundamental em todo o processo, que norteia a metodologia.</p>
            <p><u>Desenvolvimento de todas as habilidades de comunicação relacionadas ao idioma</u>, em especial a conversação e compreensão auditiva.</p>
            <p><u>Aulas de conversação com professores nativos</u>, modeladas para cada nível dos alunos dentro da escola, disponíveis a cada hora cheia, 24 horas por dia, 7 dias por semana. Também o software de reconhecimento de voz, é uma ferramente importante para o desenvolver a habilidade de fala de cada aluno.</p>
            <p><u>Conteúdo que maximiza a motivação no estudo. </u>Foco em habilidades pertinentes às necessidades de cada aluno para se comunicar em inglês.</p>
            <p><u>Todos nossos professores são nativos de língua inglesa</u>, com experiência profissional em ensino de idiomas, oriundos de diferentes países de língua inglesa e segmentos profissionais. Nossos professores trabalham com os alunos auxiliando-os a atingir seus objetivos, direcionando o foco das aulas para cada área onde o aluno necessita maior desenvolvimento.</p>
          </article>
          <i class="strip"></i>
          <div class="scroll">
            ${scrollUp}
            <i class="sthumb"></i>
            ${scrollDown}
          </div>
          <aside class="side">
            <div class="login">Fazer logon</div>
            <div class="card-wrap">
              <div class="card">
                <h3>Conta paga</h3>
                <span class="card-x">✖</span>
                <div class="li">• Conversões de PDF ilimitadas</div>
                <div class="li">• Combine arquivos em um único PDF</div>
                <div class="li">• Exporte arquivos PDF para Word,Excel,RTF</div>
                <button class="signup">Cadastrar-se agora</button>
              </div>
            </div>
            <div class="upload">
              <div class="fake-input"></div>
              <div class="disabled-btn">Selecionar arquivo</div>
            </div>
            <div class="sect"><i></i>Enviar arquivos</div>
            <div class="sect"><i></i>Armazenar arquivos</div>
            <div class="hatch"></div>
          </aside>
        </div>
      </section>
    `;
  }
}
